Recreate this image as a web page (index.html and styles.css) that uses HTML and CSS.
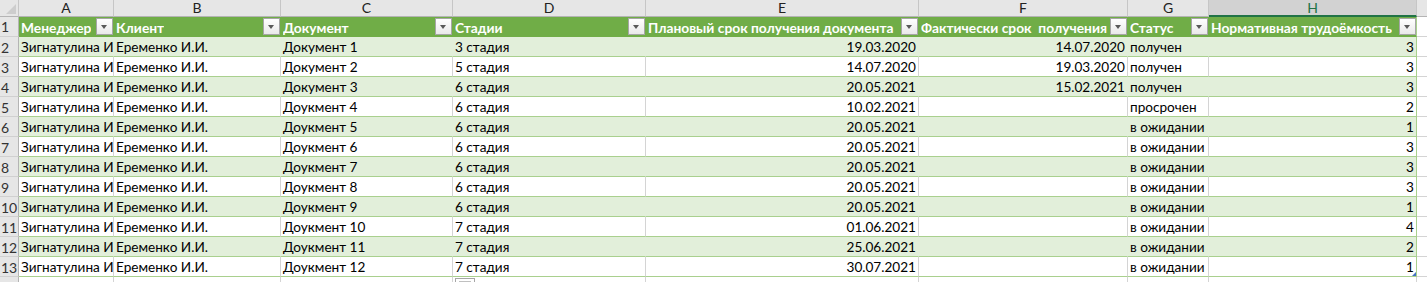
FILE: index.html
```html
<!DOCTYPE html>
<html lang="ru">
<head>
<meta charset="utf-8">
<title>Sheet</title>
<link rel="stylesheet" href="styles.css">
</head>
<body>
<div class="sheet">
  <div class="row colhead">
    <div class="c rh corner"><span class="sel-all"></span></div>
    <div class="c">A</div><div class="c">B</div><div class="c">C</div><div class="c">D</div>
    <div class="c">E</div><div class="c">F</div><div class="c">G</div><div class="c sel">H</div><div class="c last"></div>
  </div>
  <div class="row thead">
    <div class="c rh">1</div>
    <div class="c"><span class="lbl">Менеджер</span><span class="fb"></span></div>
    <div class="c"><span class="lbl">Клиент</span><span class="fb"></span></div>
    <div class="c"><span class="lbl">Документ</span><span class="fb"></span></div>
    <div class="c"><span class="lbl">Стадии</span><span class="fb"></span></div>
    <div class="c"><span class="lbl">Плановый срок получения документа</span><span class="fb"></span></div>
    <div class="c"><span class="lbl">Фактически срок&nbsp; получения</span><span class="fb"></span></div>
    <div class="c"><span class="lbl">Статус</span><span class="fb"></span></div>
    <div class="c h"><span class="lbl">Нормативная трудоёмкость</span><span class="fb"></span></div>
    <div class="c last"></div>
  </div>
  <div class="row band">
    <div class="c rh">2</div><div class="c">Зигнатулина И</div><div class="c">Еременко И.И.</div><div class="c">Документ 1</div><div class="c">3 стадия</div><div class="c num">19.03.2020</div><div class="c num">14.07.2020</div><div class="c">получен</div><div class="c h num">3</div><div class="c last"></div>
  </div>
  <div class="row">
    <div class="c rh">3</div><div class="c">Зигнатулина И</div><div class="c">Еременко И.И.</div><div class="c">Документ 2</div><div class="c">5 стадия</div><div class="c num">14.07.2020</div><div class="c num">19.03.2020</div><div class="c">получен</div><div class="c h num">3</div><div class="c last"></div>
  </div>
  <div class="row band">
    <div class="c rh">4</div><div class="c">Зигнатулина И</div><div class="c">Еременко И.И.</div><div class="c">Документ 3</div><div class="c">6 стадия</div><div class="c num">20.05.2021</div><div class="c num">15.02.2021</div><div class="c">получен</div><div class="c h num">3</div><div class="c last"></div>
  </div>
  <div class="row">
    <div class="c rh">5</div><div class="c">Зигнатулина И</div><div class="c">Еременко И.И.</div><div class="c">Доукмент 4</div><div class="c">6 стадия</div><div class="c num">10.02.2021</div><div class="c num"></div><div class="c">просрочен</div><div class="c h num">2</div><div class="c last"></div>
  </div>
  <div class="row band">
    <div class="c rh">6</div><div class="c">Зигнатулина И</div><div class="c">Еременко И.И.</div><div class="c">Доукмент 5</div><div class="c">6 стадия</div><div class="c num">20.05.2021</div><div class="c num"></div><div class="c">в ожидании</div><div class="c h num">1</div><div class="c last"></div>
  </div>
  <div class="row">
    <div class="c rh">7</div><div class="c">Зигнатулина И</div><div class="c">Еременко И.И.</div><div class="c">Доукмент 6</div><div class="c">6 стадия</div><div class="c num">20.05.2021</div><div class="c num"></div><div class="c">в ожидании</div><div class="c h num">3</div><div class="c last"></div>
  </div>
  <div class="row band">
    <div class="c rh">8</div><div class="c">Зигнатулина И</div><div class="c">Еременко И.И.</div><div class="c">Доукмент 7</div><div class="c">6 стадия</div><div class="c num">20.05.2021</div><div class="c num"></div><div class="c">в ожидании</div><div class="c h num">3</div><div class="c last"></div>
  </div>
  <div class="row">
    <div class="c rh">9</div><div class="c">Зигнатулина И</div><div class="c">Еременко И.И.</div><div class="c">Доукмент 8</div><div class="c">6 стадия</div><div class="c num">20.05.2021</div><div class="c num"></div><div class="c">в ожидании</div><div class="c h num">3</div><div class="c last"></div>
  </div>
  <div class="row band">
    <div class="c rh">10</div><div class="c">Зигнатулина И</div><div class="c">Еременко И.И.</div><div class="c">Доукмент 9</div><div class="c">6 стадия</div><div class="c num">20.05.2021</div><div class="c num"></div><div class="c">в ожидании</div><div class="c h num">1</div><div class="c last"></div>
  </div>
  <div class="row">
    <div class="c rh">11</div><div class="c">Зигнатулина И</div><div class="c">Еременко И.И.</div><div class="c">Доукмент 10</div><div class="c">7 стадия</div><div class="c num">01.06.2021</div><div class="c num"></div><div class="c">в ожидании</div><div class="c h num">4</div><div class="c last"></div>
  </div>
  <div class="row band">
    <div class="c rh">12</div><div class="c">Зигнатулина И</div><div class="c">Еременко И.И.</div><div class="c">Доукмент 11</div><div class="c">7 стадия</div><div class="c num">25.06.2021</div><div class="c num"></div><div class="c">в ожидании</div><div class="c h num">2</div><div class="c last"></div>
  </div>
  <div class="row">
    <div class="c rh">13</div><div class="c">Зигнатулина И</div><div class="c">Еременко И.И.</div><div class="c">Доукмент 12</div><div class="c">7 стадия</div><div class="c num">30.07.2021</div><div class="c num"></div><div class="c">в ожидании</div><div class="c h num resize">1</div><div class="c last"></div>
  </div>
  <div class="row empty">
    <div class="c rh"></div><div class="c"></div><div class="c"></div><div class="c"></div><div class="c"></div><div class="c"></div><div class="c"></div><div class="c"></div><div class="c"></div><div class="c last"></div>
  </div>
  <div class="qa"><span></span></div>
</div>
</body>
</html>
```

FILE: styles.css
```css
html, body {
  margin: 0;
  padding: 0;
  background: #fff;
  overflow: hidden;
}
body {
  font-family: Lato, "Open Sans", "Liberation Sans", sans-serif;
  font-size: 13.6px;
  color: #000;
}
.sheet {
  position: relative;
  width: 1427px;
  height: 282px;
  overflow: hidden;
}
.row {
  display: grid;
  grid-template-columns: 19px 95px 167px 172px 193px 273px 209px 81px 208px 1fr;
  height: 20px;
}
.c {
  box-sizing: border-box;
  border-right: 1px solid #d4d4d4;
  border-bottom: 1px solid #a9d08e;
  padding: 1px 2px 0 2px;
  line-height: 19px;
  white-space: nowrap;
  overflow: hidden;
  min-width: 0;
}
.num { text-align: right; }
.c.h { border-right-color: #a9d08e; }
.c.last {
  border-right: none;
  border-bottom-color: #d4d4d4;
}
.rh {
  background: #e6e6e6;
  color: #333;
  border-right: 1px solid #b4b4b4;
  border-bottom: 1px solid #d0d0d0;
  padding-left: 1px;
  padding-right: 0;
  font-size: 14px;
}
.band .c { background: #e2efda; border-right-color: #e2efda; }
.band .c.h { border-right-color: #a9d08e; }
.band .c.rh { background: #e6e6e6; border-right-color: #b4b4b4; }
.band .c.last { background: #fff; }

/* column letters */
.colhead { height: 17px; }
.colhead .c {
  background: #e6e6e6;
  color: #222;
  text-align: center;
  line-height: 16px;
  padding: 0;
  font-size: 14px;
  border-right: 1px solid #c6c6c6;
  border-bottom: 1px solid #b4b4b4;
}
.colhead .c.sel {
  background: #d2d2d2;
  color: #217346;
  border-bottom: 2px solid #217346;
  line-height: 15px;
}
.colhead .c.last { background: #e6e6e6; border-right: none; }
.corner { position: relative; }
.sel-all {
  position: absolute;
  right: 2px;
  bottom: 2px;
  width: 0;
  height: 0;
  border-left: 10px solid transparent;
  border-bottom: 10px solid #cdcdcd;
}

/* table header */
.thead .c {
  background: #70ad47;
  color: #fff;
  font-weight: bold;
  font-size: 13.8px;
  display: flex;
  align-items: center;
  justify-content: space-between;
  border-right-color: #70ad47;
  border-bottom-color: #70ad47;
  padding: 0 0 0 2px;
}
.thead .c.h { border-right-color: #a9d08e; }
.thead .c.rh {
  background: #e6e6e6;
  color: #333;
  font-weight: normal;
  font-size: 14px;
  border-right-color: #b4b4b4;
  border-bottom-color: #d0d0d0;
  padding-left: 1px;
}
.thead .c.last { background: #fff; border-bottom-color: #d4d4d4; }
.lbl {
  overflow: hidden;
  white-space: pre;
  min-width: 0;
  padding-top: 1px;
}
.fb {
  flex: none;
  position: relative;
  box-sizing: border-box;
  width: 17px;
  height: 17px;
  border: 1px solid #a6a6a6;
  background: linear-gradient(#ffffff, #e9e9e9);
}
.fb::after {
  content: "";
  position: absolute;
  left: 4px;
  top: 6px;
  border-left: 3.5px solid transparent;
  border-right: 3.5px solid transparent;
  border-top: 4px solid #595959;
}

.empty .c { border-bottom-color: #d4d4d4; }
.empty .c.rh { border-bottom-color: #d0d0d0; }

.resize { position: relative; }
.resize::after {
  content: "";
  position: absolute;
  right: 0;
  bottom: 0;
  border-left: 4px solid transparent;
  border-bottom: 4px solid #4472c4;
}

.qa {
  position: absolute;
  left: 455px;
  top: 278px;
  width: 20px;
  height: 12px;
  box-sizing: border-box;
  border: 1px solid #a6a6a6;
  background: #fff;
}
.qa span {
  position: absolute;
  left: 3px;
  top: 2px;
  width: 12px;
  height: 8px;
  background: #e0e0e0;
  border: 1px solid #c0c0c0;
  box-sizing: border-box;
}
```
